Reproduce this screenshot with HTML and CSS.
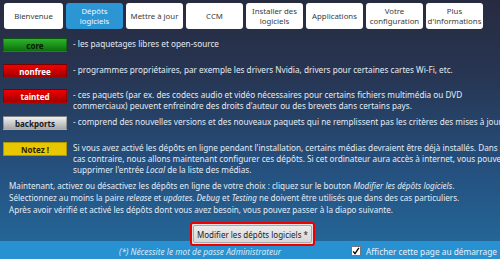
FILE: index.html
```html
<!DOCTYPE html>
<html lang="fr">
<head>
<meta charset="utf-8">
<title>Dépôts logiciels</title>
<link rel="stylesheet" href="styles.css">
</head>
<body>
<div class="page">
  <main class="main">
    <nav class="tabs">
      <div class="tab">Bienvenue</div>
      <div class="tab active">Dépôts<br>logiciels</div>
      <div class="tab">Mettre à jour</div>
      <div class="tab">CCM</div>
      <div class="tab">Installer des<br>logiciels</div>
      <div class="tab">Applications</div>
      <div class="tab">Votre<br>configuration</div>
      <div class="tab">Plus<br>d'informations</div>
    </nav>

    <div class="repos">
      <div class="label core">core</div>
      <div class="desc">- les paquetages libres et open-source</div>

      <div class="label red">nonfree</div>
      <div class="desc">- programmes propriétaires, par exemple les drivers Nvidia, drivers pour certaines cartes Wi-Fi, etc.</div>

      <div class="label red">tainted</div>
      <div class="desc">- ces paquets (par ex. des codecs audio et vidéo nécessaires pour certains fichiers multimédia ou DVD<br>commerciaux) peuvent enfreindre des droits d'auteur ou des brevets dans certains pays.</div>

      <div class="label grey">backports</div>
      <div class="desc">- comprend des nouvelles versions et des nouveaux paquets qui ne remplissent pas les critères des mises à jour</div>

      <div class="label yellow">Notez !</div>
      <div class="desc">Si vous avez activé les dépôts en ligne pendant l'installation, certains médias devraient être déjà installés. Dans le<br>cas contraire, nous allons maintenant configurer ces dépôts. Si cet ordinateur aura accès à internet, vous pouvez<br>supprimer l'entrée <i>Local</i> de la liste des médias.</div>
    </div>

    <p class="intro">Maintenant, activez ou désactivez les dépôts en ligne de votre choix : cliquez sur le bouton <i>Modifier les dépôts logiciels</i>.<br>Sélectionnez au moins la paire <i>release</i> et <i>updates</i>. <i>Debug</i> et <i>Testing</i> ne doivent être utilisés que dans des cas particuliers.<br>Après avoir vérifié et activé les dépôts dont vous avez besoin, vous pouvez passer à la diapo suivante.</p>

    <div class="action">
      <div class="highlight"><button class="btn">Modifier les dépôts logiciels *</button></div>
    </div>
  </main>

  <footer class="footer">
    <span class="note">(*) Nécessite le mot de passe Administrateur</span>
    <label class="startup">
      <span class="check"><svg width="8" height="8" viewBox="0 0 8 8"><path d="M1.2 4.3 L3 6.6 L6.9 0.8" fill="none" stroke="#000" stroke-width="1.3"/></svg></span>
      Afficher cette page au démarrage
    </label>
  </footer>
</div>
</body>
</html>
```

FILE: styles.css
```css
html, body {
  margin: 0;
  padding: 0;
}
body {
  width: 500px;
  height: 259px;
  overflow: hidden;
  font-family: "Noto Sans", "Open Sans", sans-serif;
  font-size: 8.2px;
  color: #e4ebf3;
  background: #262b3f;
}
.page {
  width: 500px;
  height: 259px;
  display: flex;
  flex-direction: column;
  background: linear-gradient(to bottom, #272b40 0%, #273654 30%, #25507e 65%, #236b9d 100%);
}
.main {
  flex: 1;
  display: flex;
  flex-direction: column;
  min-height: 0;
}
.tabs {
  display: flex;
  gap: 3px;
  padding: 3px 0 0 4px;
}
.tab {
  width: 57px;
  height: 26px;
  box-sizing: border-box;
  background: #ffffff;
  color: #3a3a3a;
  border-radius: 3px;
  display: flex;
  align-items: center;
  justify-content: center;
  text-align: center;
  line-height: 10px;
  font-size: 7.8px;
}
.tab:first-child {
  width: 59px;
}
.tab.active {
  background: #2c95d4;
  color: #f2f8fc;
}
.repos {
  margin-top: 9px;
  display: grid;
  grid-template-columns: 64px minmax(0, 1fr);
  grid-template-rows: 26px 25px 27px 26px auto;
  column-gap: 6px;
  padding-left: 3px;
}
.label {
  height: 14px;
  box-sizing: border-box;
  display: flex;
  align-items: center;
  justify-content: center;
  font-weight: bold;
  font-size: 8px;
  border: 1px solid rgba(0,0,0,0.25);
}
.core {
  background: linear-gradient(to bottom, #2cb42c, #0b700b);
  color: #061806;
}
.red {
  background: linear-gradient(to bottom, #f20000, #a00000);
  color: #ffffff;
}
.grey {
  background: linear-gradient(to bottom, #f0f0f0, #a8a8a8);
  color: #1a1a1a;
}
.yellow {
  background: #e9c700;
  color: #2a2200;
}
.desc {
  line-height: 11px;
  white-space: nowrap;
  overflow: hidden;
}
.intro {
  margin: 5px 0 0 9px;
  line-height: 12px;
  font-size: 8.1px;
  white-space: nowrap;
}
.action {
  margin-top: 6px;
  display: flex;
  justify-content: center;
  position: relative;
  z-index: 1;
  margin-bottom: -5px;
  padding-left: 5px;
}
.highlight {
  border: 2px solid #ee0000;
  border-radius: 3px;
  padding: 1px;
  background: #e0e0e0;
}
.btn {
  display: block;
  width: 119px;
  height: 18px;
  padding: 0;
  font-family: "Noto Sans", "Open Sans", sans-serif;
  font-size: 8px;
  color: #222;
  background: linear-gradient(to bottom, #ececec, #d8d8d8);
  border: 1px solid #a9a9a9;
  border-radius: 2px;
}
.footer {
  height: 18px;
  flex: none;
  background: #2891d2;
  display: flex;
  align-items: center;
  font-size: 8.3px;
  color: #e6f1fa;
}
.note {
  font-style: italic;
  margin-left: 119px;
  flex: 1;
  color: #d9e9f6;
  padding-top: 2px;
}
.startup {
  display: flex;
  align-items: center;
  gap: 5px;
  padding-right: 3px;
  padding-top: 2px;
}
.check {
  width: 10px;
  height: 10px;
  box-sizing: border-box;
  background: #fff;
  border: 1px solid #777;
  display: flex;
  align-items: center;
  justify-content: center;
}
```
